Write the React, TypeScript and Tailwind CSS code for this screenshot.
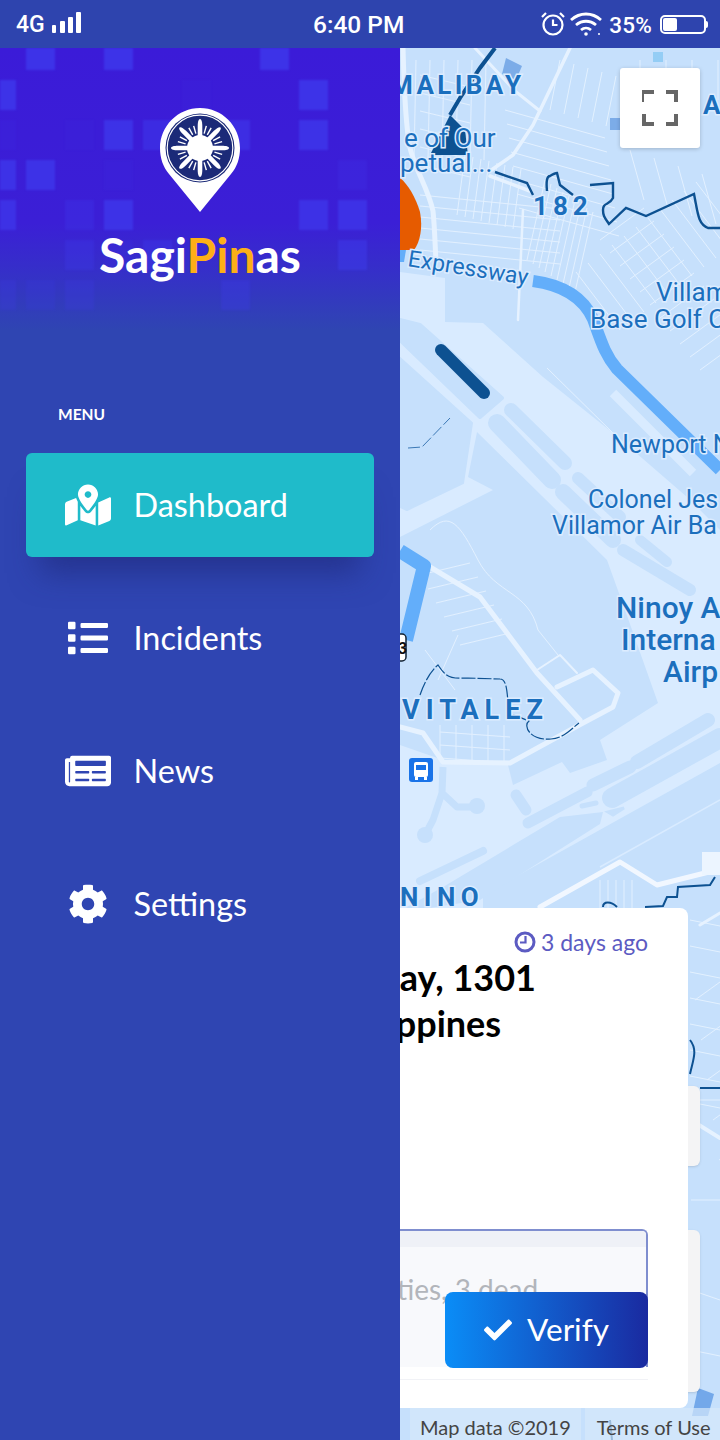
import { FaCheck, FaCog, FaList, FaMapMarkedAlt, FaNewspaper } from "react-icons/fa";
import type { ReactNode } from "react";

const ROAD = "#e6f2ff";
const LAND = "#c6e0fc";
const LIGHT = "#d9ebff";
const WATER = "#0d5191";

// [col, row, opacity] of the tile pattern behind the logo
const tiles = [
  [0, 0, 0.7], [2, 0, 0.7], [6, 0, 0.7],
  [-1, 1, 0.7], [7, 1, 0.7], [4, 1, 0.06],
  [-1, 2, 0.12], [2, 2, 0.65], [3, 2, 0.45], [5, 2, 0.5], [7, 2, 0.65], [1, 2, 0.06],
  [-1, 3, 0.65], [0, 3, 0.65], [2, 3, 0.1], [8, 3, 0.2],
  [-1, 4, 0.6], [1, 4, 0.3], [2, 4, 0.65], [7, 4, 0.6], [8, 4, 0.6],
  [1, 5, 0.3], [2, 5, 0.12], [3, 5, 0.35], [8, 5, 0.45],
  [-1, 6, 0.2], [0, 6, 0.15], [1, 6, 0.2], [5, 6, 0.3],
];

const menu = [
  { label: "Dashboard", icon: <FaMapMarkedAlt size={46} />, active: true },
  { label: "Incidents", icon: <FaList size={40} /> },
  { label: "News", icon: <FaNewspaper size={46} /> },
  { label: "Settings", icon: <FaCog size={40} /> },
];

function SunLogo() {
  const long = [0, 45, 90, 135, 180, 225, 270, 315];
  const short = long.flatMap((a) => [a + 16, a + 29]);
  return (
    <svg width="80" height="106" viewBox="0 0 80 106" className="block">
      <path d="M40 0C18 0 0 18 0 40c0 10 3 19 9 26l31 38 31-38c6-7 9-16 9-26C80 18 62 0 40 0Z" fill="#fff" />
      <circle cx="40" cy="40" r="34.500" fill="#1b2a78" />
      <circle cx="40" cy="40" r="32.800" fill="none" stroke="#fff" strokeWidth="1.200" />
      {long.map((a) => (
        <path key={a} d="M40 11c1.500 0 2.300 3 2.300 7v10h-4.600V18c0-4 .8-7 2.300-7Z" fill="#fff" transform={`rotate(${a} 40 40)`} />
      ))}
      {short.map((a) => (
        <rect key={a} x="39.300" y="17" width="1.400" height="8" fill="#fff" transform={`rotate(${a} 40 40)`} />
      ))}
      <circle cx="40" cy="40" r="13" fill="#fff" />
    </svg>
  );
}

function StatusBar() {
  return (
    <div className="relative z-20 flex h-12 shrink-0 items-center justify-between bg-[#2e44ae] pl-4 pr-3 pt-[3px] font-['Roboto',sans-serif] font-medium text-white">
      <div className="flex items-center gap-[7px]">
        <span className="text-[23px]">4G</span>
        <svg width="29" height="22" viewBox="0 0 29 22" fill="#fff" className="mt-[-5px]">
          <rect x="0" y="13" width="4" height="8" rx="1" />
          <rect x="8" y="9" width="5" height="12" rx="1" />
          <rect x="16" y="5" width="5" height="16" rx="1" />
          <rect x="24" y="0" width="5" height="21" rx="1" />
        </svg>
      </div>
      <span className="absolute left-[313px] text-[24.500px]">6:40 PM</span>
      <div className="flex items-center">
        <svg width="26" height="26" viewBox="0 0 26 26" fill="none" stroke="#fff" strokeWidth="2.200" className="mt-[-3px]">
          <circle cx="13" cy="14" r="9.500" />
          <path d="M13 8.500V14h4.500" />
          <path d="M2 6l4-4M24 6l-4-4" />
        </svg>
        <svg width="34" height="28" viewBox="0 0 34 26" fill="none" stroke="#fff" strokeWidth="2.800" className="ml-[3px] mt-[-4px]">
          <path d="M2 9c9-8 21-8 30 0" />
          <path d="M7 14c6-5 14-5 20 0" />
          <path d="M12 19c3-2.500 7-2.500 10 0" />
          <circle cx="17" cy="23" r="1.800" fill="#fff" stroke="none" />
          <circle cx="30" cy="23" r="1" fill="#fff" stroke="none" />
        </svg>
        <span className="ml-[6px] text-[22.500px] tracking-[0.2px]">35%</span>
        <div className="ml-2 mt-[-2px] flex h-[19px] w-[46px] items-center rounded-[5px] border-2 border-white px-[1px]">
          <div className="h-[13px] w-[14px] rounded-[2px] bg-white" />
        </div>
        <div className="mt-[-2px] h-[7px] w-[2px] rounded-r bg-white" />
      </div>
    </div>
  );
}

function Drawer() {
  return (
    <aside className="relative z-10 flex w-[400px] shrink-0 flex-col bg-[#2f45b2] font-['Lato',sans-serif] text-white">
      <div className="relative flex h-[282px] flex-col items-center bg-[linear-gradient(180deg,#3b1bd8_0%,#3b1fd6_62%,#3530c8_80%,#2f45b2_100%)] pt-[60px]">
        <svg width="400" height="282" className="absolute left-0 top-0 blur-[1px]" fill="#3f3df0">
          {tiles.map(([c, r, o]) => (
            <rect key={`${c}-${r}`} x={26 + c * 39} y={r === 0 ? 0 : r * 40 - 8} width="29" height={r === 0 ? 22 : 30} opacity={o} />
          ))}
        </svg>
        <div className="relative">
          <SunLogo />
        </div>
        <div className="relative mt-[12px] text-[48px] font-bold leading-[58px]">
          Sagi<span className="text-[#fdaf17]">Pin</span>as
        </div>
      </div>
      <div className="mt-[74px] pl-[58px] text-[15.500px] font-bold leading-5">MENU</div>
      <nav className="mt-[29px] flex flex-col gap-[29px] px-[26px]">
        {menu.map((m) => (
          <div
            key={m.label}
            className={`flex h-[104px] items-center rounded-md ${m.active ? "bg-[#1fbbca] shadow-[0_30px_30px_-14px_rgba(30,40,120,0.6)]" : ""}`}
          >
            <div className="flex w-[107.500px] justify-center pl-[17px]">{m.icon}</div>
            <span className="text-[32.400px] leading-10">{m.label}</span>
          </div>
        ))}
      </nav>
    </aside>
  );
}

function Label({ x, y, size = 26, weight = 400, spacing, children, rotate }: { x: number; y: number; size?: number; weight?: number; spacing?: number; children: ReactNode; rotate?: number }) {
  return (
    <text
      x={x}
      y={y}
      fontSize={size}
      fontWeight={weight}
      letterSpacing={spacing}
      transform={rotate ? `rotate(${rotate} ${x} ${y})` : undefined}
      className="fill-[#1b6fbd] stroke-[#dcecff] stroke-[3px] font-['Roboto',sans-serif] [paint-order:stroke]"
    >
      {children}
    </text>
  );
}

function lines(x0: number, y0: number, n: number, dx: number, dy: number, lx: number, ly: number) {
  return Array.from({ length: n }, (_, i) => {
    const x = x0 + i * dx;
    const y = y0 + i * dy;
    return `M${x} ${y}l${lx} ${ly}`;
  }).join("");
}

function MapBackground() {
  return (
    <svg viewBox="400 48 320 1392" width="320" height="1392" className="absolute left-0 top-0 block" fill="none">
      <rect x="400" y="48" width="320" height="1392" fill={LAND} />

      {/* airport grounds */}
      <path d="M400 272 445 278V322L483 323 543 377 613 433 687 497 720 530V800L400 960Z" fill={LIGHT} />
      <path d="M400 320 420 325 502 398 480 417 400 340Z" fill={LAND} stroke={LAND} strokeWidth="4" strokeLinejoin="round" />
      <path d="M400 358 472 423 463 483 407 510 400 507Z" fill={LAND} stroke={LAND} strokeWidth="2" strokeLinejoin="round" />
      <path d="M477 432 607 560 625 610 658 703 600 740 607 760 570 773 562 762 513 785 508 765 443 760 400 745V537L493 490 468 477Z" fill={LAND} />
      <path d="M483 895 720 763V910H483Z" fill={LAND} />
      <path d="M443 887 560 817 603 812 600 824 480 900 430 908H405Z" fill={LAND} />

      {/* taxiway pills */}
      <g stroke={LAND} strokeLinecap="round">
        <path d="M511 410 565 463" strokeWidth="14" />
        <path d="M497 423 552 480" strokeWidth="18" />
        <path d="M578 478 620 517" strokeWidth="12" />
        <path d="M563 492 613 540" strokeWidth="16" />
        <path d="M640 540 667 562" strokeWidth="10" />
        <path d="M623 550 690 590" strokeWidth="12" />
        <path d="M637 762 708 720" strokeWidth="14" />
        <path d="M612 798 720 738" strokeWidth="20" />
        <path d="M593 785 630 767" strokeWidth="13" />
        <path d="M582 806 596 803" strokeWidth="5" />
        <path d="M528 823 587 792" strokeWidth="11" />
        <path d="M516 795 526 810" strokeWidth="11" />
        <path d="M420 881 483 851" strokeWidth="8" />
      </g>
      <path d="M608 812 624 808 613 815Z" fill={LAND} stroke={LAND} strokeWidth="3" />
      <path d="M443 767 442 793 457 807H477M442 793 433 820 425 835" stroke={LAND} strokeWidth="7" strokeLinejoin="round" />
      <circle cx="477" cy="806" r="8" fill={LAND} />
      <circle cx="425" cy="835" r="8" fill={LAND} />
      <path d="M600 867 720 800" stroke={LIGHT} strokeWidth="1.500" />
      <path d="M613 393 693 473" stroke={LIGHT} strokeWidth="9" />

      {/* street grids */}
      <g stroke={ROAD} strokeWidth="1" opacity="0.9">
        <path d={lines(620, 330, 11, 12, -9, -44, -58)} />
        <path d={lines(600, 240, 11, 10, 13, 44, -32)} />
        <path d={lines(416, 60, 6, 14, 0, -2, 100)} />
        <path d={lines(420, 75, 6, 0, 18, 50, 12)} />
        <path d={lines(505, 110, 8, 2, 14, 100, 28)} />
        <path d={lines(560, 60, 5, 14, 4, -10, 50)} />
        <path d={lines(465, 155, 8, 8, 2, -8, 60)} />
        <path d={lines(420, 195, 6, 0, 11, 140, 14)} />
        <path d={lines(545, 180, 9, 6, 4, -18, 80)} />
        <path d={lines(640, 60, 4, 26, 0, 0, 40)} />
        <path d={lines(630, 150, 5, 24, 8, 14, 50)} />
        <path d={lines(420, 575, 6, 8, 14, 50, -12)} />
        <path d={lines(440, 725, 5, 16, 0, 0, 36)} />
        <path d={lines(440, 732, 3, 0, 13, 70, 5)} />
        <path d={lines(690, 920, 8, 0, 26, 30, 6)} />
        <path d={lines(695, 1000, 8, 6, 40, 25, -18)} />
        <path d={lines(600, 880, 5, 8, 0, 0, 28)} />
        <path d="M430 530c20-20 30-5 48 30s50 30 60 70l20 25M425 650l30 40M458 635l-20 45" />
        <path d="M547 368 613 433" />
        <path d="M691 1100h29M691 1200h29M691 1290l29 10M691 1350l29 6" />
      </g>

      {/* main roads */}
      <g stroke={ROAD} strokeLinecap="round" strokeLinejoin="round">
        <path d="M403 48c1 40 3 80 7 100 6 24 18 40 23 63 2 20 2 36 3 50" strokeWidth="5" />
        <path d="M475 48 515 91 540 111" strokeWidth="3" />
        <path d="M570 48 533 125 513 155 490 171" strokeWidth="3.500" />
        <path d="M490 176 530 191" strokeWidth="3.500" />
        <path d="M523 210 518 320" strokeWidth="2.500" />
        <path d="M430 567 480 597 537 673 580 720" strokeWidth="5" />
        <path d="M557 687 593 670 618 693 613 707 583 723 510 763 443 762 423 733 400 727" strokeWidth="5" />
        <path d="M537 670 560 655 577 673" strokeWidth="2" />
        <path d="M540 907 620 862 657 885 717 870" strokeWidth="5" stroke="#f1f7ff" />
        <path d="M691 1120l29 18" strokeWidth="4" />
        <path d="M700 925l20-12" strokeWidth="3" />
      </g>
      <path d="M702 852h18v23h-18Z" fill="#ecf5ff" />

      {/* expressway */}
      <g stroke="#63aefa" strokeLinejoin="round">
        <path d="M533 281c30 4 50 16 60 38 8 22 12 36 24 50l103 101" strokeWidth="12" />
        <path d="M400 551 424 566 406 640" strokeWidth="14" />
      </g>

      {/* water */}
      <path d="M495 48 480 68 460 98 450 115" stroke={WATER} strokeWidth="4" />
      <path d="M430 155 450 115 465 130 468 155Z" fill={WATER} />
      <path d="M495 172 527 183 533 195M547 191c-1-10 0-15 3-15 5-3 7-3 7-3l3 12 13 10M590 185l23-2v15c-4 8-10 4-10 12 0 6 2 8 6 14l17-16 20 8 48-22c4 20 4 30 14 34h12" stroke={WATER} strokeWidth="2.400" />
      <path d="M441 350 484 393" stroke={WATER} strokeWidth="12" strokeLinecap="round" />
      <path d="M408 448l14-1 28-29" stroke="#3b78b5" strokeWidth="1" strokeDasharray="12 3" />
      <path d="M420 695c5-15 12-25 18-30 8 12 12 14 30 13l32 1c8 0 7 18 9 34l20 8c-6 4 0 20 22 18 14-1 22-12 28-16" stroke={WATER} strokeWidth="1.200" strokeDasharray="14 2" />
      <path d="M603 907c0-6 8-6 14 0M645 907l18-1 4-9h10l1-10 32-2 5-8M690 1040c8 10 3 20 0 34M700 1088h20M610 1420l2 20" stroke={WATER} strokeWidth="2" />

      {/* parks and blocks */}
      <path d="M506 58l16 8-6 14-14-6Z" fill="#7cace8" />
      <path d="M610 118h12v12h-12Z" fill="#7cace8" />
      <path d="M653 52h10v10h-10Z" fill="#94cdf5" />
      <path d="M400 178c8 6 16 20 20 34 3 16 0 30-6 38h-14Z" fill="#e65b00" />
      <path d="M400 250h6l-2 12h-4Z" fill="#63aefa" />
      <path d="M698 1388l16 6-6 22h-16Z" fill="#73a8ea" />

      {/* shield and bus stop */}
      <rect x="392" y="634" width="14" height="27" rx="4" fill="#fff" stroke="#123" strokeWidth="1.500" />
      <text x="398" y="654" fontSize="16" fontWeight="700" fill="#111" className="font-['Roboto',sans-serif]">3</text>
      <rect x="409" y="758" width="24" height="24" rx="3" fill="#1a73e8" />
      <rect x="414" y="762" width="14" height="15" rx="2" fill="#fff" />
      <rect x="416" y="765" width="10" height="5" fill="#1a73e8" />
      <rect x="415" y="777" width="3" height="3" fill="#fff" />
      <rect x="424" y="777" width="3" height="3" fill="#fff" />

      <Label x={390} y={94} weight={700} spacing={3.400}>MALIBAY</Label>
      <Label x={703} y={114} weight={700}>A</Label>
      <Label x={404} y={147}>e of Our</Label>
      <Label x={400} y={172}>petual...</Label>
      <Label x={533} y={215} weight={700} spacing={5}>182</Label>
      <Label x={407} y={266} size={23} rotate={9}>Expressway</Label>
      <Label x={656} y={301}>Villam</Label>
      <Label x={590} y={328}>Base Golf C</Label>
      <Label x={611} y={453} size={25}>Newport N</Label>
      <Label x={588} y={508} size={25}>Colonel Jes</Label>
      <Label x={552} y={534} size={25}>Villamor Air Ba</Label>
      <Label x={616} y={618} size={30} weight={500}>Ninoy A</Label>
      <Label x={621} y={650} size={30} weight={500}>Interna</Label>
      <Label x={663} y={682} size={30} weight={500}>Airp</Label>
      <Label x={402} y={719} weight={700} spacing={6} size={27}>VITALEZ</Label>
      <Label x={400} y={906} weight={700} spacing={5.500}>NINO</Label>
    </svg>
  );
}

function MapPanel() {
  return (
    <main className="relative flex-1 overflow-hidden font-['Lato',sans-serif]">
      <MapBackground />

      <button className="absolute left-[220px] top-5 flex h-20 w-20 items-center justify-center rounded-[3px] bg-white shadow-[0_1px_4px_rgba(0,0,0,0.2)]">
        <svg width="36" height="36" viewBox="0 0 36 36" fill="none" stroke="#666" strokeWidth="4">
          <path d="M0 12V2h12M24 2h10v10M2 24v10h10M24 34h10V24" />
        </svg>
      </button>

      {/* cards stacked behind the open one */}
      <div className="absolute left-0 top-[1038px] h-[80px] w-[300px] rounded-md bg-[#f4f4f5] shadow-sm" />
      <div className="absolute left-0 top-[1182px] h-[162px] w-[300px] rounded-md bg-[#f4f4f5] shadow-sm" />

      <div className="absolute bottom-[32px] left-[-120px] flex h-[500px] w-[408px] flex-col rounded-lg bg-white pr-10">
        <div className="mt-[20px] flex items-center justify-end gap-[5px] text-[23px] leading-7 text-[#5c5bc2]">
          <svg width="22" height="22" viewBox="0 0 22 22" fill="none" stroke="#5c5bc2" strokeWidth="3">
            <circle cx="11" cy="11" r="9" />
            <path d="M11.500 5v6.500H6" strokeWidth="2.200" />
          </svg>
          <span>3 days ago</span>
        </div>
        <div className="mt-[-2px] pl-[64px] text-[36px] font-bold leading-[46px] text-black">
          <div>Pasay, 1301</div>
          <div className="ml-[-18px]">Philippines</div>
        </div>
        <div className="relative mt-[183px] flex h-[138px] flex-col overflow-hidden rounded-t-md border-r-2 border-t-2 border-[#7f8ecf] bg-[#f8f9fc]">
          <div className="h-4 shrink-0 bg-[#eff1f7]" />
          <div className="mt-[26px] pl-[18px] text-[28px] leading-8 text-[#b2b5bb] whitespace-nowrap">4 casualties, 3 dead</div>
        </div>
        <div className="mt-[12px] h-px bg-[#f1f2f6]" />
        <button className="absolute bottom-[40px] right-10 flex h-[76px] w-[203px] items-center justify-center gap-[15px] rounded-lg bg-[linear-gradient(90deg,#0a8df7_0%,#1a2aa0_100%)] text-[31.500px] text-white">
          <FaCheck size={28} />
          <span>Verify</span>
        </button>
      </div>

      <div className="absolute bottom-0 left-[10px] flex h-8 gap-[4px] whitespace-nowrap text-[20px] leading-[38px] text-[#444]">
        <span className="bg-[#d6e8fb]/70 px-[10px]">Map data ©2019</span>
        <span className="bg-[#d6e8fb]/70 pl-[12px] pr-[20px]">Terms of Use</span>
      </div>
    </main>
  );
}

export default function App() {
  return (
    <div className="flex h-[1440px] w-[720px] flex-col overflow-hidden">
      <StatusBar />
      <div className="flex flex-1">
        <Drawer />
        <MapPanel />
      </div>
    </div>
  );
}
